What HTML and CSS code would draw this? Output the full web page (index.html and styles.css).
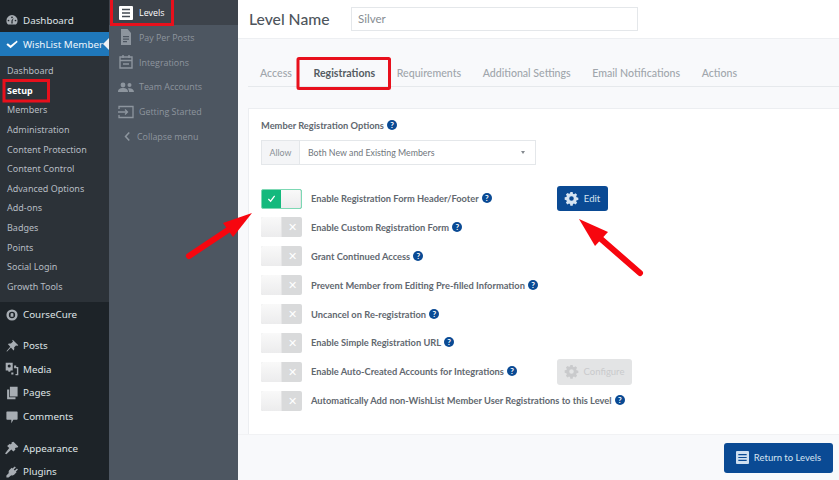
FILE: index.html
```html
<!DOCTYPE html>
<html lang="en">
<head>
<meta charset="utf-8">
<title>Level Name</title>
<link rel="stylesheet" href="styles.css">
</head>
<body>
<div class="page">
  <nav class="wp">
    <div class="wp-item first"><svg class="wp-ic" viewBox="0 0 20 20"><path d="M10 3a8 8 0 0 0-8 8c0 2.200.9 4.200 2.300 5.600h11.400A8 8 0 0 0 18 11a8 8 0 0 0-8-8zm0 2a1.200 1.200 0 1 1 0 2.400A1.200 1.200 0 0 1 10 5zM5 9.500a1.200 1.200 0 1 1 0 2.400 1.200 1.200 0 0 1 0-2.400zm10 0a1.200 1.200 0 1 1 0 2.400 1.200 1.200 0 0 1 0-2.400zM11 15H9l.4-4.500 3-3.500-1.600 4.500z"/></svg><span>Dashboard</span></div>
    <div class="wp-item active"><svg class="wp-ic check" viewBox="0 0 20 20"><path d="M2 11l2-2 4 3 9-7 1 2-10 9z"/></svg><span>WishList Member</span><i class="notch"></i></div>
    <ul class="wp-sub">
      <li>Dashboard</li>
      <li class="cur">Setup</li>
      <li>Members</li>
      <li>Administration</li>
      <li>Content Protection</li>
      <li>Content Control</li>
      <li>Advanced Options</li>
      <li>Add-ons</li>
      <li>Badges</li>
      <li>Points</li>
      <li>Social Login</li>
      <li>Growth Tools</li>
    </ul>
    <div class="wp-item course"><svg class="wp-ic" viewBox="0 0 20 20"><path fill-rule="evenodd" d="M10 2a8 8 0 1 0 0 16 8 8 0 0 0 0-16zm0 3.500a4.500 4.500 0 1 1 0 9 4.500 4.500 0 0 1 0-9zM8 8v4.500h4V8h-1V7H9v1z"/></svg><span>CourseCure</span></div>
    <div class="wp-item gap"><svg class="wp-ic" viewBox="0 0 20 20"><path d="M11 1l8 8-2 1-1-1-3 3c.6 2 .2 3.500-.8 4.500L8.500 12 3 18l-1-.5L7.500 11 4 7.300C5 6.300 6.500 6 8.500 6.500l3-3-1-1z"/></svg><span>Posts</span></div>
    <div class="wp-item"><svg class="wp-ic" viewBox="0 0 20 20"><path fill-rule="evenodd" d="M1 1h10v11H8l-.5 2H5l-.5-2H1zm5 2.500a2.200 2.200 0 1 0 0 4.400 2.200 2.200 0 0 0 0-4.400zM13 5h3v2h3v12h-4v-2h2V9h-4zM9 15h3v3H9z"/></svg><span>Media</span></div>
    <div class="wp-item"><svg class="wp-ic" viewBox="0 0 20 20"><path d="M7 1h11v14H7zM3 5h3v11h9v3H3z"/></svg><span>Pages</span></div>
    <div class="wp-item"><svg class="wp-ic" viewBox="0 0 20 20"><path d="M3 2h14a1 1 0 0 1 1 1v10a1 1 0 0 1-1 1h-5l-3 5v-5H3a1 1 0 0 1-1-1V3a1 1 0 0 1 1-1z"/></svg><span>Comments</span></div>
    <div class="wp-item gap2"><svg class="wp-ic" viewBox="0 0 20 20"><path d="M12 1l7 7-2 2-1-1-2 2 1 1-3 3-3-3-7 7-2-1 6-8-3-3 4-3 1 1 2-2-1-1z"/></svg><span>Appearance</span></div>
    <div class="wp-item"><svg class="wp-ic" viewBox="0 0 20 20"><path d="M14 2l1.500 1.500-3 3L14 8l3-3 1.500 1.500-3 3 1 1-3.500 3.500c-1.500 1-3 1-4 .5L5 18H2v-3l3.500-3.500c-.5-1-.5-2.500.5-4L9.500 4l1 1z"/></svg><span>Plugins</span></div>
  </nav>

  <aside class="side">
    <div class="side-item on"><svg class="side-ic" viewBox="0 0 16 16"><rect x="1" y="1" width="14" height="14" rx="1" fill="#fff"/><path d="M4 4.500h8M4 8h8M4 11.500h8" stroke="#444b53" stroke-width="1.500"/></svg><span>Levels</span></div>
    <div class="side-item"><svg class="side-ic" viewBox="0 0 16 16"><path fill="#8d959e" d="M3 0h6.500L13 4v12H3zM5 7v1.200h6V7zm0 2.500v1.200h6V9.500zM5 12v1.200h4V12z"/></svg><span>Pay Per Posts</span></div>
    <div class="side-item"><svg class="side-ic" viewBox="0 0 16 16"><path fill="none" stroke="#8d959e" stroke-width="1.400" d="M2 3h12v11H2zM2 6.500h12"/><path stroke="#8d959e" stroke-width="1.400" d="M5 1v3M11 1v3M5 10h6"/></svg><span>Integrations</span></div>
    <div class="side-item"><svg class="side-ic" viewBox="0 0 16 16"><circle cx="5" cy="6" r="2.400" fill="#8d959e"/><circle cx="11.500" cy="6" r="2" fill="#8d959e"/><path fill="#8d959e" d="M0 13c0-3 2-4 5-4s5 1 5 4zM11 13c0-1.500-.4-2.800-1.300-3.600 3-.8 6.300.4 6.300 3.600z"/></svg><span>Team Accounts</span></div>
    <div class="side-item"><svg class="side-ic" viewBox="0 0 16 16"><path fill="none" stroke="#8d959e" stroke-width="1.300" d="M1 5V2.500h14v11H1V11"/><path fill="none" stroke="#8d959e" stroke-width="1.300" d="M0 8h9M7 5.500L9.500 8 7 10.500"/></svg><span>Getting Started</span></div>
    <div class="side-item collapse"><svg class="chev" viewBox="0 0 8 12"><path fill="none" stroke="#8d959e" stroke-width="1.800" d="M6 1.500L1.800 6 6 10.500"/></svg><span>Collapse menu</span></div>
  </aside>

  <main class="main">
    <header class="head">
      <h1>Level Name</h1>
      <div class="input">Silver</div>
    </header>
    <div class="tabs">
      <a class="tab">Access</a>
      <a class="tab sel">Registrations</a>
      <a class="tab">Requirements</a>
      <a class="tab">Additional Settings</a>
      <a class="tab">Email Notifications</a>
      <a class="tab">Actions</a>
    </div>
    <section class="card">
      <div class="opt-label">Member Registration Options <b class="q">?</b></div>
      <div class="select">
        <span class="prefix">Allow</span>
        <span class="value">Both New and Existing Members</span>
        <i class="caret"></i>
      </div>
      <div class="rows">
        <div class="row">
          <span class="tog on"><i class="tk"><svg viewBox="0 0 10 10"><path fill="none" stroke="#fff" stroke-width="1.400" d="M1.500 5.500L4 8l4.500-6"/></svg></i><i class="knob"></i></span>
          <span class="lab">Enable Registration Form Header/Footer <b class="q">?</b></span>
          <a class="btn edit"><svg class="gear" viewBox="0 0 16 16"><use href="#gear"/></svg>Edit</a>
        </div>
        <div class="row">
          <span class="tog"><i class="knob"></i><i class="tk">&#x2715;</i></span>
          <span class="lab">Enable Custom Registration Form <b class="q">?</b></span>
        </div>
        <div class="row">
          <span class="tog"><i class="knob"></i><i class="tk">&#x2715;</i></span>
          <span class="lab">Grant Continued Access <b class="q">?</b></span>
        </div>
        <div class="row">
          <span class="tog"><i class="knob"></i><i class="tk">&#x2715;</i></span>
          <span class="lab">Prevent Member from Editing Pre-filled Information <b class="q">?</b></span>
        </div>
        <div class="row">
          <span class="tog"><i class="knob"></i><i class="tk">&#x2715;</i></span>
          <span class="lab">Uncancel on Re-registration <b class="q">?</b></span>
        </div>
        <div class="row">
          <span class="tog"><i class="knob"></i><i class="tk">&#x2715;</i></span>
          <span class="lab">Enable Simple Registration URL <b class="q">?</b></span>
        </div>
        <div class="row">
          <span class="tog"><i class="knob"></i><i class="tk">&#x2715;</i></span>
          <span class="lab">Enable Auto-Created Accounts for Integrations <b class="q">?</b></span>
          <a class="btn conf"><svg class="gear" viewBox="0 0 16 16"><use href="#gear"/></svg>Configure</a>
        </div>
        <div class="row">
          <span class="tog"><i class="knob"></i><i class="tk">&#x2715;</i></span>
          <span class="lab">Automatically Add non-WishList Member User Registrations to this Level <b class="q">?</b></span>
        </div>
      </div>
    </section>
    <footer class="foot">
      <a class="btn ret"><svg class="list" viewBox="0 0 14 14"><rect width="14" height="14" rx="1" fill="#cfdff0"/><path d="M2.500 3.800h9M2.500 7h9M2.500 10.200h9" stroke="#0a4a94" stroke-width="1.300"/></svg>Return to Levels</a>
    </footer>
  </main>

  <svg class="marks" viewBox="0 0 839 480" aria-hidden="true">
    <defs>
      <path id="gear" fill="currentColor" fill-rule="evenodd" d="M6.600 0h2.800l.4 2.100 1.300.6L12.900 1.500l2 2-1.200 1.800.6 1.300 2.100.4v2.800l-2.100.4-.6 1.300 1.200 1.800-2 2-1.800-1.200-1.300.6-.4 2.100H6.600l-.4-2.100-1.300-.6-1.800 1.200-2-2 1.200-1.800-.6-1.300L-.4 9.400V6.600l2.100-.4.6-1.300L1.100 3.100l2-2 1.800 1.200 1.300-.6zM8 5.200a2.800 2.800 0 1 0 0 5.600 2.800 2.800 0 0 0 0-5.600z"/>
    </defs>
    <g fill="none" stroke="#e8101c" stroke-width="3">
      <rect x="111.500" y="-3" width="61" height="27.500"/>
      <rect x="4" y="80.500" width="44.500" height="20.500"/>
      <rect x="298" y="58.500" width="91.500" height="30" rx="1"/>
    </g>
    <g fill="#f7060f">
      <path d="M252 213L223 223L233 237Z"/>
      <path d="M579 219L608 232L595 246Z"/>
    </g>
    <g stroke="#f7060f" stroke-width="6" stroke-linecap="round">
      <path d="M228 230L189 256"/>
      <path d="M601 239L640 273"/>
    </g>
  </svg>
</div>
</body>
</html>
```

FILE: styles.css
```css
* { box-sizing: border-box; }
html, body { margin: 0; padding: 0; }
body { width: 839px; height: 480px; overflow: hidden; font-family: "Lato", "Liberation Sans", sans-serif; }
.page { position: relative; display: flex; width: 839px; height: 480px; overflow: hidden; background: #f8f9fb; }

/* WordPress menu */
.wp { flex: 0 0 109px; background: #1d2328; color: #dfe3e6; font-family: "Noto Sans", sans-serif; font-size: 9.800px; }
.wp-item { display: flex; align-items: center; gap: 4px; height: 23.700px; padding-left: 5px; white-space: nowrap; position: relative; }
.wp-item.first { margin-top: 8px; height: 24px; }
.wp-ic { width: 14px; height: 14px; fill: #a7adb3; flex: none; }
.wp-item.active { height: 24px; background: #1f78bb; color: #eef6fb; }
.wp-ic.check { fill: #fff; }
.notch { position: absolute; right: 0; top: 6px; border: 6px solid transparent; border-right-color: #f1f2f4; border-left-width: 0; }
.wp-sub { list-style: none; margin: 0; padding: 5px 0 6px; background: #2c3238; color: #b6bcc2; font-size: 9px; height: 246px; }
.wp-sub li { height: 19.640px; line-height: 19.640px; padding-left: 7px; }
.wp-sub li.cur { color: #fff; font-weight: 700; }
.wp-item.course { margin-top: 1px; }
.wp-item.gap { margin-top: 7px; }
.wp-item.gap2 { margin-top: 8px; }

/* Secondary menu */
.side { flex: 0 0 129px; background: #4d5661; color: #8d959e; font-family: "Open Sans", sans-serif; font-size: 8.900px; }
.side-item { display: flex; align-items: center; gap: 5px; height: 24.800px; padding-left: 9px; white-space: nowrap; }
.side-ic { width: 16px; height: 16px; flex: none; }
.side-item.on { height: 25px; background: #3d434b; color: #fff; }
.side-item.collapse { padding-left: 15px; gap: 6px; }
.chev { width: 7px; height: 11px; flex: none; }

/* Main */
.main { flex: 1; display: flex; flex-direction: column; min-width: 0; }
.head { display: flex; align-items: center; height: 39px; padding-left: 11px; background: #fff; border-bottom: 1px solid #edeff2; }
.head h1 { margin: 0; width: 102px; font-size: 15.700px; font-weight: 500; color: #4e555c; white-space: nowrap; }
.input { width: 287px; height: 24px; line-height: 22px; padding-left: 6px; border: 1px solid #e4e7ea; background: #fff; font-size: 11.500px; color: #878d93; }
.tabs { display: flex; height: 47.500px; margin: 0 0 21px 10px; padding: 21px 0 0 12px; gap: 21.600px; align-items: center; border-bottom: 1px solid #e6e9ec; font-size: 10.600px; color: #a0a6ac; font-weight: 500; white-space: nowrap; }
.tab.sel { color: #555c63; font-weight: 700; }
.card { flex: none; height: 326px; margin-left: 10px; padding: 10px 0 0 12px; background: #fff; border: 1px solid #eceef1; border-right: 0; border-bottom: 0; }
.opt-label { font-size: 9.300px; font-weight: 700; color: #62686f; height: 14px; line-height: 14px; white-space: nowrap; }
.q { display: inline-block; width: 10px; height: 10px; margin-left: 1px; border-radius: 50%; background: #0a4a94; color: #fff; font-size: 8px; line-height: 10px; text-align: center; font-weight: 700; vertical-align: 1px; }
.select { display: flex; align-items: center; width: 275px; height: 25px; margin-top: 7px; border: 1px solid #e4e7ea; font-size: 8.800px; color: #70767c; position: relative; }
.prefix { width: 38px; height: 100%; line-height: 23px; text-align: center; background: #f4f5f7; border-right: 1px solid #e4e7ea; color: #8a9096; }
.value { padding-left: 8px; }
.caret { position: absolute; right: 10px; top: 10px; border: 2.500px solid transparent; border-top: 3px solid #84898f; border-bottom: 0; }
.rows { margin-top: 19.600px; }
.row { display: flex; align-items: center; height: 28.900px; }
.tog { display: flex; width: 41px; height: 20px; border-radius: 2px; background: #d9dadb; overflow: hidden; flex: none; }
.tog.on { background: #14b97d; border: 1px solid #7dd8b4; }
.knob { flex: 0 0 21px; background: linear-gradient(#f9f9f9, #ececed); border-right: 1px solid #e5e5e6; }
.tog.on .knob { flex: 1; }
.tk { flex: 1; display: flex; align-items: center; justify-content: center; color: #fff; font-style: normal; font-size: 11px; }
.tk svg { width: 9px; height: 9px; }
.lab { flex: 0 0 246px; margin-left: 9px; font-size: 9.300px; font-weight: 700; color: #62686f; white-space: nowrap; }
.btn { display: inline-flex; align-items: center; justify-content: center; border-radius: 3px; white-space: nowrap; font-size: 9.500px; }
.gear { width: 13px; height: 13px; margin-right: 6px; overflow: visible; }
.edit { width: 51px; height: 25px; background: #0a4a94; color: #d6e4f2; }
.conf { width: 75px; height: 26px; background: #e3e4e5; color: #c9cacc; }
.foot { flex: 1; display: flex; justify-content: flex-end; align-items: flex-start; padding: 8px 6px 0 0; border-top: 1px solid #f1f2f4; }
.ret { width: 109px; height: 30px; background: #0a4a94; color: #d6e4f2; font-size: 9.500px; }
.list { width: 13px; height: 13px; margin-right: 5px; }

/* Annotations lying over the interface */
.marks { position: absolute; left: 0; top: 0; width: 839px; height: 480px; pointer-events: none; }
```
